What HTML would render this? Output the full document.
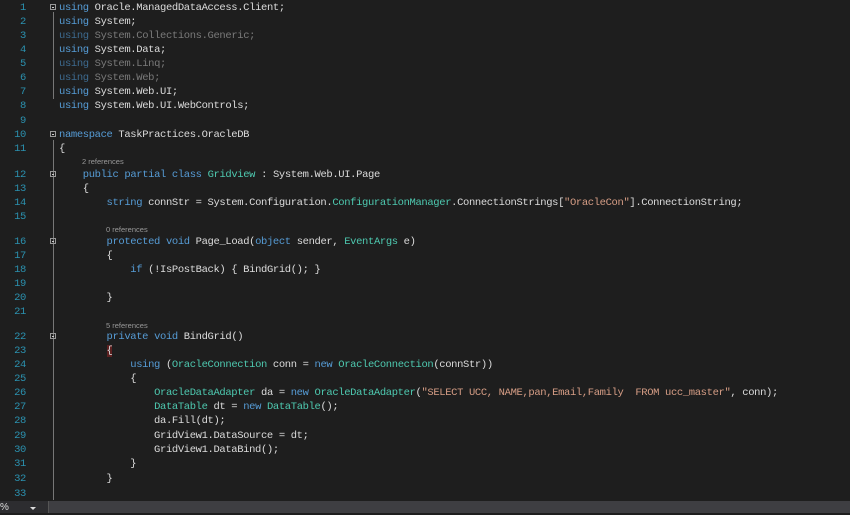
<!DOCTYPE html>
<html><head><meta charset="utf-8"><style>
body{margin:0;width:850px;height:513px;background:#1e1e1e;overflow:hidden;position:relative;font-family:"Liberation Mono",monospace;}
.l{position:absolute;left:59px;font-size:10.5px;letter-spacing:-0.36px;line-height:14px;height:14px;color:#dcdcdc;white-space:pre;}
.n{position:absolute;left:0;width:26px;text-align:right;font-size:10.5px;letter-spacing:-0.36px;line-height:14px;color:#2b91af;}
.c{position:absolute;font-family:"Liberation Sans",sans-serif;font-size:7.5px;color:#999;line-height:10px;}
.k{color:#569cd6}.t{color:#4ec9b0}.s{color:#d69d85}.g{color:#7a7a7a}.gk{color:#3d6a8f}
.f{position:absolute;left:50px;width:6px;height:6px;border:1px solid #999;box-sizing:border-box;}
.f:after{content:"";position:absolute;left:1px;top:2px;width:2px;height:0;border-top:1px solid #ccc}
.v{position:absolute;left:53px;width:1px;background:#777}
.br{background:#5c2020}
</style></head><body>
<div class="v" style="top:12px;height:87px"></div>
<div class="v" style="top:140px;height:360px"></div>
<div class="f" style="top:4px"></div><div class="f" style="top:131px"></div><div class="f" style="top:171px"></div><div class="f" style="top:238px"></div><div class="f" style="top:333px"></div>

<div class="n" style="top:1px">1</div><div class="l" style="top:1px"><span class="k">using</span> Oracle.ManagedDataAccess.Client;</div>
<div class="n" style="top:15px">2</div><div class="l" style="top:15px"><span class="k">using</span> System;</div>
<div class="n" style="top:29px">3</div><div class="l" style="top:29px"><span class="gk">using</span> <span class="g">System.Collections.Generic;</span></div>
<div class="n" style="top:43px">4</div><div class="l" style="top:43px"><span class="k">using</span> System.Data;</div>
<div class="n" style="top:57px">5</div><div class="l" style="top:57px"><span class="gk">using</span> <span class="g">System.Linq;</span></div>
<div class="n" style="top:71px">6</div><div class="l" style="top:71px"><span class="gk">using</span> <span class="g">System.Web;</span></div>
<div class="n" style="top:85px">7</div><div class="l" style="top:85px"><span class="k">using</span> System.Web.UI;</div>
<div class="n" style="top:99px">8</div><div class="l" style="top:99px"><span class="k">using</span> System.Web.UI.WebControls;</div>
<div class="n" style="top:114px">9</div>
<div class="n" style="top:128px">10</div><div class="l" style="top:128px"><span class="k">namespace</span> TaskPractices.OracleDB</div>
<div class="n" style="top:142px">11</div><div class="l" style="top:142px">{</div>
<div class="c" style="top:157px;left:82px">2 references</div>
<div class="n" style="top:168px">12</div><div class="l" style="top:168px">    <span class="k">public</span> <span class="k">partial</span> <span class="k">class</span> <span class="t">Gridview</span> : System.Web.UI.Page</div>
<div class="n" style="top:182px">13</div><div class="l" style="top:182px">    {</div>
<div class="n" style="top:196px">14</div><div class="l" style="top:196px">        <span class="k">string</span> connStr = System.Configuration.<span class="t">ConfigurationManager</span>.ConnectionStrings[<span class="s">"OracleCon"</span>].ConnectionString;</div>
<div class="n" style="top:210px">15</div>
<div class="c" style="top:225px;left:106px">0 references</div>
<div class="n" style="top:235px">16</div><div class="l" style="top:235px">        <span class="k">protected</span> <span class="k">void</span> Page_Load(<span class="k">object</span> sender, <span class="t">EventArgs</span> e)</div>
<div class="n" style="top:249px">17</div><div class="l" style="top:249px">        {</div>
<div class="n" style="top:263px">18</div><div class="l" style="top:263px">            <span class="k">if</span> (!IsPostBack) { BindGrid(); }</div>
<div class="n" style="top:277px">19</div>
<div class="n" style="top:291px">20</div><div class="l" style="top:291px">        }</div>
<div class="n" style="top:305px">21</div>
<div class="c" style="top:321px;left:106px">5 references</div>
<div class="n" style="top:330px">22</div><div class="l" style="top:330px">        <span class="k">private</span> <span class="k">void</span> BindGrid()</div>
<div class="n" style="top:344px">23</div><div class="l" style="top:344px">        <span class="br">{</span></div>
<div class="n" style="top:358px">24</div><div class="l" style="top:358px">            <span class="k">using</span> (<span class="t">OracleConnection</span> conn = <span class="k">new</span> <span class="t">OracleConnection</span>(connStr))</div>
<div class="n" style="top:372px">25</div><div class="l" style="top:372px">            {</div>
<div class="n" style="top:386px">26</div><div class="l" style="top:386px">                <span class="t">OracleDataAdapter</span> da = <span class="k">new</span> <span class="t">OracleDataAdapter</span>(<span class="s">"SELECT UCC, NAME,pan,Email,Family  FROM ucc_master"</span>, conn);</div>
<div class="n" style="top:400px">27</div><div class="l" style="top:400px">                <span class="t">DataTable</span> dt = <span class="k">new</span> <span class="t">DataTable</span>();</div>
<div class="n" style="top:414px">28</div><div class="l" style="top:414px">                da.Fill(dt);</div>
<div class="n" style="top:429px">29</div><div class="l" style="top:429px">                GridView1.DataSource = dt;</div>
<div class="n" style="top:443px">30</div><div class="l" style="top:443px">                GridView1.DataBind();</div>
<div class="n" style="top:457px">31</div><div class="l" style="top:457px">            }</div>
<div class="n" style="top:472px">32</div><div class="l" style="top:472px">        }</div>
<div class="n" style="top:487px">33</div>

<div style="position:absolute;left:0;top:501px;width:850px;height:12px;background:#3e3e42"></div>
<div style="position:absolute;left:0;top:501px;width:48px;height:12px;background:#2d2d30;color:#ddd;font-family:'Liberation Sans',sans-serif;font-size:10px;line-height:14px">%</div>
<div style="position:absolute;left:30px;top:507px;width:0;height:0;border-left:3px solid transparent;border-right:3px solid transparent;border-top:3px solid #ddd"></div>
<div style="position:absolute;left:48px;top:501px;width:1px;height:12px;background:#555"></div>
</body></html>
